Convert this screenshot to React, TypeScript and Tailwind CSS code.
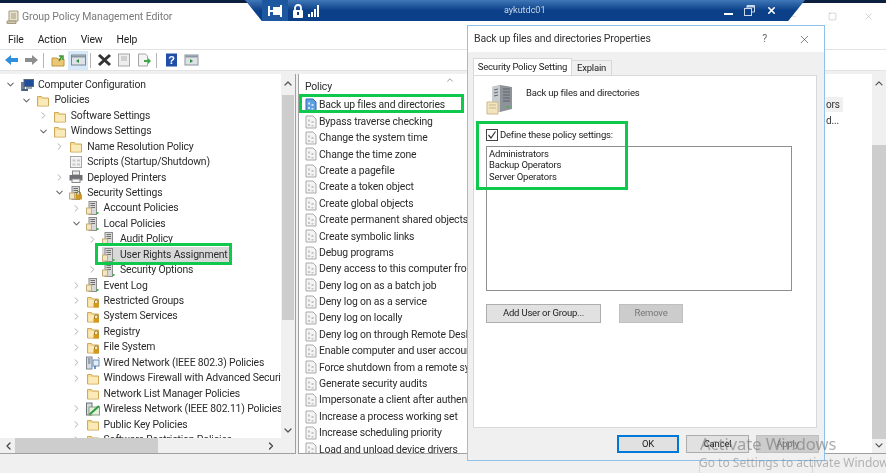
import { ChevronDown, ChevronRight, ChevronUp, ChevronLeft, X, Minus, Square } from 'lucide-react'

type IconKind = 'computer' | 'folder' | 'script' | 'printer' | 'lock' | 'server' | 'lockFolder' | 'net' | 'wifi'

const treeRows: { depth: number; arrow?: 'open' | 'closed'; icon: IconKind; label: string; selected?: boolean }[] = [
  { depth: 0, arrow: 'open', icon: 'computer', label: 'Computer Configuration' },
  { depth: 1, arrow: 'open', icon: 'folder', label: 'Policies' },
  { depth: 2, arrow: 'closed', icon: 'folder', label: 'Software Settings' },
  { depth: 2, arrow: 'open', icon: 'folder', label: 'Windows Settings' },
  { depth: 3, arrow: 'closed', icon: 'folder', label: 'Name Resolution Policy' },
  { depth: 3, icon: 'script', label: 'Scripts (Startup/Shutdown)' },
  { depth: 3, arrow: 'closed', icon: 'printer', label: 'Deployed Printers' },
  { depth: 3, arrow: 'open', icon: 'lock', label: 'Security Settings' },
  { depth: 4, arrow: 'closed', icon: 'server', label: 'Account Policies' },
  { depth: 4, arrow: 'open', icon: 'server', label: 'Local Policies' },
  { depth: 5, arrow: 'closed', icon: 'server', label: 'Audit Policy' },
  { depth: 5, icon: 'server', label: 'User Rights Assignment', selected: true },
  { depth: 5, arrow: 'closed', icon: 'server', label: 'Security Options' },
  { depth: 4, arrow: 'closed', icon: 'server', label: 'Event Log' },
  { depth: 4, arrow: 'closed', icon: 'lockFolder', label: 'Restricted Groups' },
  { depth: 4, arrow: 'closed', icon: 'lockFolder', label: 'System Services' },
  { depth: 4, arrow: 'closed', icon: 'lockFolder', label: 'Registry' },
  { depth: 4, arrow: 'closed', icon: 'lockFolder', label: 'File System' },
  { depth: 4, arrow: 'closed', icon: 'net', label: 'Wired Network (IEEE 802.3) Policies' },
  { depth: 4, arrow: 'closed', icon: 'folder', label: 'Windows Firewall with Advanced Security' },
  { depth: 4, icon: 'folder', label: 'Network List Manager Policies' },
  { depth: 4, arrow: 'closed', icon: 'wifi', label: 'Wireless Network (IEEE 802.11) Policies' },
  { depth: 4, arrow: 'closed', icon: 'folder', label: 'Public Key Policies' },
  { depth: 4, arrow: 'closed', icon: 'folder', label: 'Software Restriction Policies' },
]

const policies = [
  'Back up files and directories',
  'Bypass traverse checking',
  'Change the system time',
  'Change the time zone',
  'Create a pagefile',
  'Create a token object',
  'Create global objects',
  'Create permanent shared objects',
  'Create symbolic links',
  'Debug programs',
  'Deny access to this computer from the network',
  'Deny log on as a batch job',
  'Deny log on as a service',
  'Deny log on locally',
  'Deny log on through Remote Desktop Services',
  'Enable computer and user accounts to be trusted',
  'Force shutdown from a remote system',
  'Generate security audits',
  'Impersonate a client after authentication',
  'Increase a process working set',
  'Increase scheduling priority',
  'Load and unload device drivers',
]

function FolderGlyph() {
  return (
    <>
      <path d="M1.5 3.5h4l1 1.5h6v8h-11z" fill="#f6dc93" stroke="#cfa95a" strokeWidth="1" />
      <path d="M2.5 6h9.5v6.5h-9.5z" fill="#fbeab9" />
    </>
  )
}

function TreeIcon({ kind }: { kind: IconKind }) {
  return (
    <svg width="14" height="14" viewBox="0 0 14 14" className="shrink-0">
      {(kind === 'folder' || kind === 'lockFolder') && <FolderGlyph />}
      {kind === 'lockFolder' && (
        <>
          <path d="M8.5 9V7.5a1.7 1.7 0 0 1 3.4 0V9" fill="none" stroke="#8a6d2c" />
          <rect x="7.5" y="9" width="5.5" height="4.5" fill="#d19a1e" />
        </>
      )}
      {kind === 'computer' && (
        <>
          <rect x="1" y="4" width="4" height="9" fill="#6f7f95" />
          <rect x="4" y="1.5" width="9.5" height="7" fill="#1f4e9c" stroke="#5a6777" />
          <rect x="6" y="9" width="6" height="2" fill="#9aa5b3" />
          <rect x="2" y="11" width="6" height="2" fill="#48607f" />
        </>
      )}
      {kind === 'script' && (
        <>
          <rect x="1.5" y="1.5" width="11" height="11" fill="#f3f3f3" stroke="#a5a5a5" />
          <path d="M3.5 4.5h3v2h-3zM8 4.5h3v2h-3zM3.5 8.5h3v2h-3zM8 8.5h3v2h-3z" fill="#c8c8c8" />
        </>
      )}
      {kind === 'printer' && (
        <>
          <rect x="3.5" y="1" width="7" height="4" fill="#eeeeee" stroke="#888888" />
          <rect x="0.5" y="5" width="13" height="5.5" fill="#6d6f73" />
          <rect x="3" y="9" width="8" height="3.5" fill="#f5f5f5" stroke="#888888" />
        </>
      )}
      {(kind === 'lock' || kind === 'server') && (
        <>
          <rect x="3" y="0.5" width="7.5" height="13" fill="#d8d8d8" stroke="#8c8c8c" />
          <path d="M4.5 2.5h4.5M4.5 4.5h4.5M4.5 6.5h4.5" stroke="#6e6e6e" />
          <rect x="0.5" y="7" width="5" height="6" fill="#f4e6c0" stroke="#c3ad7a" />
          <rect x="10.5" y="11" width="2" height="2" fill="#3fb54a" />
        </>
      )}
      {kind === 'lock' && (
        <>
          <path d="M7.5 9V7.5a2 2 0 0 1 4 0V9" fill="none" stroke="#8a6d2c" />
          <rect x="6.5" y="8.5" width="6.5" height="5" fill="#d19a1e" />
        </>
      )}
      {kind === 'net' && (
        <>
          <rect x="0.5" y="1" width="5.5" height="12" fill="#d5dbe3" stroke="#7f8791" />
          <path d="M2 3h2.5M2 5h2.5M2 7h2.5" stroke="#5e6670" />
          <rect x="7" y="4" width="6" height="6" fill="#e4eef9" stroke="#6b8db8" />
          <path d="M9 10v3" stroke="#3e72b5" strokeWidth="1.5" />
          <path d="M12 1l1.5 2" stroke="#888888" />
        </>
      )}
      {kind === 'wifi' && (
        <>
          <rect x="0.5" y="1" width="5.5" height="12" fill="#d5d8dc" stroke="#6e747b" />
          <rect x="3" y="5" width="10.5" height="8" fill="#e2f0dc" stroke="#8b9a86" />
          <path d="M3.5 12.5L13 4" stroke="#2f9a3d" strokeWidth="2" />
        </>
      )}
    </svg>
  )
}

function PolicyIcon({ active }: { active?: boolean }) {
  const page = active ? '#5f9fe0' : '#f4f4f4'
  const line = active ? '#2f6cb5' : '#a9a9a9'
  return (
    <svg width="12" height="14" viewBox="0 0 12 14" className="shrink-0">
      <path d="M1 1h7l3 3v9H1z" fill={page} stroke={line} />
      <path d="M3 4.5h2v2H3zM6.5 6h2v2h-2zM3 9h2v2H3zM6.5 10h2v1.5h-2z" fill={active ? '#cfe3f8' : '#c4c4c4'} />
    </svg>
  )
}

function ToolButton({ children, active }: { children: React.ReactNode; active?: boolean }) {
  return (
    <div className={active ? 'flex h-[19px] w-[20px] items-center justify-center bg-[#d7e9f8]' : 'flex h-[19px] w-[20px] items-center justify-center'}>
      <svg width="15" height="14" viewBox="0 0 15 14">
        {children}
      </svg>
    </div>
  )
}

function Toolbar() {
  return (
    <div className="flex h-[20px] items-center bg-white pl-[1px]">
      <ToolButton>
        <path d="M14 5H7V2L1 7l6 5V9h7z" fill="#2f8fdc" />
      </ToolButton>
      <ToolButton>
        <path d="M1 5h7V2l6 5-6 5V9H1z" fill="#8e8e8e" />
      </ToolButton>
      <div className="mx-[2px] h-[15px] w-px bg-[#b5b5b5]" />
      <div className="ml-[2px]" />
      <ToolButton>
        <path d="M1 5h5l1 1h6v7H1z" fill="#edc874" stroke="#bd9444" />
        <path d="M8 8l3-5M8 3h4v4" fill="none" stroke="#3c9a3a" strokeWidth="1.5" />
      </ToolButton>
      <ToolButton active>
        <rect x="0.5" y="2" width="14" height="10" fill="#dfe3e7" stroke="#7b8794" />
        <rect x="1" y="2.5" width="13" height="2" fill="#8b97a3" />
        <path d="M8 6v4L5 8z" fill="#2f8f3f" />
      </ToolButton>
      <div className="mx-[2px] h-[15px] w-px bg-[#b5b5b5]" />
      <div className="ml-[1px]" />
      <ToolButton>
        <path d="M2 2l11 10M13 2L2 12" stroke="#333333" strokeWidth="3" />
      </ToolButton>
      <ToolButton>
        <rect x="1.5" y="1" width="11" height="12" fill="#eeeeee" stroke="#a6a6a6" />
        <rect x="4" y="3" width="6" height="5" fill="#d0d0d0" />
      </ToolButton>
      <ToolButton>
        <path d="M1.5 1h7l2 2v10h-9z" fill="#f4f4f4" stroke="#a6a6a6" />
        <path d="M7 7h4V5l3 3-3 3V9H7z" fill="#3fa648" />
      </ToolButton>
      <div className="mx-[2px] h-[15px] w-px bg-[#b5b5b5]" />
      <div className="ml-[2px]" />
      <ToolButton>
        <rect x="2" y="0.5" width="11" height="13" fill="#1f4fa8" />
        <text x="7.5" y="11" fontSize="11" fontWeight="700" fill="#ffffff" textAnchor="middle" fontFamily="Liberation Sans, sans-serif">?</text>
      </ToolButton>
      <ToolButton>
        <rect x="1" y="2" width="13" height="10" fill="#dfe3e7" stroke="#8a949e" />
        <rect x="1.5" y="2.5" width="12" height="2" fill="#8b97a3" />
        <path d="M6 6v4l3-2z" fill="#2f8f3f" />
      </ToolButton>
    </div>
  )
}

function ScrollTrack({ children, className }: { children: React.ReactNode; className: string }) {
  return <div className={className}>{children}</div>
}

function TreePane() {
  return (
    <div className="relative flex h-full w-[296px] shrink-0 flex-col border-r border-b border-[#a0a0a0] bg-white">
      <div className="flex min-h-0 flex-1">
        <div className="min-w-0 flex-1 overflow-hidden pt-[3px]">
          {treeRows.map(row => (
            <div key={row.label} className="flex h-[15.45px] items-center whitespace-nowrap" style={{ marginLeft: 5 + row.depth * 16.4 }}>
              <span className="flex w-[15px] shrink-0 items-center justify-start text-[#666666]">
                {row.arrow === 'open' && <ChevronDown size={11} strokeWidth={2.2} />}
                {row.arrow === 'closed' && <ChevronRight size={11} strokeWidth={2} className="text-[#a6a6a6]" />}
              </span>
              <span className={row.selected ? 'flex h-[15px] items-center bg-[#d9d9d9] pr-[2px]' : 'flex items-center'}>
                <TreeIcon kind={row.icon} />
                <span className="pl-[4px]">{row.label}</span>
              </span>
            </div>
          ))}
        </div>
        <ScrollTrack className="flex w-[14px] shrink-0 flex-col bg-[#f0f0f0] pt-[3px] text-[#555555]">
          <ChevronUp size={12} strokeWidth={2.5} className="mx-auto h-[13px]" />
          <div className="mx-[1px] mt-[5px] h-[225px] bg-[#cdcdcd]" />
          <div className="flex-1" />
          <ChevronDown size={12} strokeWidth={2.5} className="mx-auto mb-[1px] h-[13px]" />
        </ScrollTrack>
      </div>
      <div className="flex h-[15px] shrink-0 items-center bg-[#f0f0f0] text-[#444444]">
        <ChevronLeft size={12} strokeWidth={2.5} className="ml-[2px] w-[13px]" />
        <div className="h-full w-[143px] bg-[#cdcdcd]" />
        <ChevronRight size={12} strokeWidth={2.5} className="ml-[107px]" />
      </div>
    </div>
  )
}

function PolicyPane() {
  return (
    <div className="ml-[2px] flex h-full min-w-0 flex-1 border-b border-l border-[#a0a0a0] bg-white">
      <div className="min-w-0 flex-1 overflow-hidden">
        <div className="relative h-[23px] pl-[6px] pt-[5px] leading-[15px]">
          Policy
          <ChevronUp size={10} className="absolute left-[146px] top-[1px] text-[#888888]" />
        </div>
        {policies.map((name, i) => (
          <div key={name} className="flex h-[16.4px] items-center whitespace-nowrap pl-[6px]">
            <PolicyIcon active={i === 0} />
            <span className="pl-[2px]">{name}</span>
          </div>
        ))}
      </div>
      <div className="w-[30px]" />
      <ScrollTrack className="flex w-[14px] shrink-0 flex-col bg-[#f0f0f0] pt-[3px] text-[#555555]">
        <ChevronUp size={12} strokeWidth={2.5} className="mx-auto h-[13px]" />
        <div className="mt-[55px] h-[300px] bg-[#cdcdcd]" />
        <div className="flex-1" />
        <ChevronDown size={12} strokeWidth={2.5} className="mx-auto mb-[1px] h-[13px]" />
      </ScrollTrack>
    </div>
  )
}

function DialogButton({ label, variant }: { label: string; variant?: 'primary' | 'disabled' }) {
  const look =
    variant === 'primary'
      ? 'border-2 border-[#0078d7] bg-[#e1e1e1] text-[#222222]'
      : variant === 'disabled'
        ? 'border border-[#bfbfbf] bg-[#cccccc] text-[#777777]'
        : 'border border-[#adadad] bg-[#e1e1e1] text-[#222222]'
  return <div className={`flex h-full items-center justify-center ${look}`}>{label}</div>
}

function PropertiesDialog() {
  return (
    <div className="absolute left-[467px] top-[25px] flex h-[436px] w-[358px] flex-col border border-[#8fc1ea] bg-[#f0f0f0] text-[9.5px] tracking-[-0.2px] text-[#222222]">
      <div className="flex h-[26px] shrink-0 items-center bg-white pl-[6px] text-[10.5px] tracking-[-0.15px] text-[#333333]">
        <span>Back up files and directories Properties</span>
        <span className="ml-auto mr-[31px] text-[#666666]">?</span>
        <X size={13} strokeWidth={1.2} className="mr-[13px] text-[#444444]" />
      </div>
      <div className="ml-[5px] mt-[6px] flex h-[17px] items-end">
        <div className="flex h-[17px] w-[99px] items-center justify-center whitespace-nowrap border border-b-0 border-[#d9d9d9] bg-white">Security Policy Setting</div>
        <div className="flex h-[15px] w-[40px] items-center justify-center border border-b-0 border-l-0 border-[#d9d9d9] bg-[#f0f0f0]">Explain</div>
      </div>
      <div className="ml-[5px] flex h-[353px] w-[344px] flex-col border border-[#d9d9d9] bg-white pl-[12px]">
        <div className="flex h-[49px] items-start pt-[9px]">
          <svg width="27" height="31" viewBox="0 0 27 31" className="shrink-0">
            <path d="M6 2l8-2 12 2v22l-12 3-8-2z" fill="#8e9299" />
            <path d="M6 2l8-2v27l-8-2z" fill="#c9ccd1" />
            <path d="M8 5l4-1M8 8l4-1M8 11l4-1M17 4h7M17 7h7M17 10h7M17 13h7M17 16h7" stroke="#5f636a" />
            <path d="M1 17h11v12H1z" fill="#f2e4bd" stroke="#c9b98f" />
            <path d="M3 20h7M3 23h7" stroke="#c9b98f" />
            <rect x="21" y="21" width="2" height="2" fill="#3fb54a" />
          </svg>
          <span className="ml-[13px] pt-[1px]">Back up files and directories</span>
        </div>
        <div className="flex h-[20px] items-center">
          <div className="flex h-[12px] w-[12px] items-center justify-center border border-[#444444]">
            <svg width="10" height="10" viewBox="0 0 10 10">
              <path d="M1.5 5l2.5 3 4.5-6.5" fill="none" stroke="#333333" strokeWidth="1.2" />
            </svg>
          </div>
          <span className="pl-[2px]">Define these policy settings:</span>
        </div>
        <div className="mt-[1px] h-[145px] w-[306px] border border-[#8f8f8f] pl-[2px] pt-[1px] leading-[11.4px]">
          <div>Administrators</div>
          <div>Backup Operators</div>
          <div>Server Operators</div>
        </div>
        <div className="mt-[13px] flex h-[19px]">
          <div className="w-[115px]"><DialogButton label="Add User or Group..." /></div>
          <div className="ml-[18px] w-[64px]"><DialogButton label="Remove" variant="disabled" /></div>
        </div>
      </div>
      <div className="ml-[149px] mt-[7px] flex h-[18px] gap-[7px]">
        <div className="w-[62px]"><DialogButton label="OK" variant="primary" /></div>
        <div className="w-[63px]"><DialogButton label="Cancel" /></div>
        <div className="w-[63px]"><DialogButton label="Apply" variant="disabled" /></div>
      </div>
    </div>
  )
}

function RemoteBar() {
  return (
    <div className="absolute left-[245px] top-0 flex h-[21px] w-[560px] items-center bg-gradient-to-b from-[#3f78b8] via-[#0b3f88] to-[#0b3f88] pl-[17px] text-white [clip-path:polygon(0_0,100%_0,97%_100%,3%_100%)]">
      <div className="flex h-full w-[26px] items-center justify-center bg-[#1d579f]">
        <svg width="15" height="12" viewBox="0 0 15 12">
          <path d="M0 1h2v10H0zM12 0h2v12h-2zM2 5h10v2H2zM5 2h7v8H5z" fill="#ffffff" />
        </svg>
      </div>
      <svg width="12" height="14" viewBox="0 0 12 14" className="ml-[4px]">
        <path d="M3 6V4a3 3 0 0 1 6 0v2" fill="none" stroke="#ffffff" strokeWidth="1.8" />
        <rect x="1" y="6" width="10" height="8" rx="1" fill="#ffffff" />
        <rect x="5" y="8" width="2" height="3" fill="#0b3f88" />
      </svg>
      <svg width="12" height="12" viewBox="0 0 12 12" className="ml-[4px]">
        <path d="M0 9h2v3H0zM3 7h2v5H3zM6 4h2v8H6zM9 0h2v12H9z" fill="#ffffff" />
      </svg>
      <span className="ml-[184px] w-[196px] text-[9px] tracking-normal text-[#c9d8ea]">aykutdc01</span>
      <div className="ml-[24px] flex items-center">
        <div className="mt-[6px] h-[2px] w-[9px] bg-white" />
        <svg width="11" height="11" viewBox="0 0 11 11" className="ml-[11px]">
          <rect x="0.5" y="3.5" width="7" height="7" fill="none" stroke="#c9d8ea" />
          <path d="M3 3V0.5h7.5V7H8" fill="none" stroke="#c9d8ea" />
          <rect x="3" y="0.5" width="7.5" height="2" fill="#c9d8ea" />
        </svg>
        <X size={11} strokeWidth={3.5} className="ml-[11px]" />
      </div>
    </div>
  )
}

export default function App() {
  return (
    <div className="relative h-[473px] w-[886px] overflow-hidden bg-[#f0f0f0] font-['Roboto',sans-serif] text-[10.4px] tracking-[-0.15px] text-[#2b2b2b] blur-[0.3px]">
      <div className="flex h-[473px] flex-col">
        <div className="h-[3px] shrink-0 bg-[#0c1f3f]" />
        <div className="flex h-[27px] shrink-0 items-center bg-white pl-[6px]">
          <svg width="13" height="14" viewBox="0 0 13 14">
            <path d="M3 1h9v10H3z" fill="#e9e2cf" stroke="#a49a80" />
            <path d="M1 11h9v2.5H1z" fill="#cfc6ad" stroke="#a49a80" />
            <path d="M5 4h5M5 6h5M5 8h5" stroke="#a49a80" />
          </svg>
          <span className="pl-[3px] text-[10.5px] tracking-[-0.1px] text-[#7a7a7a]">Group Policy Management Editor</span>
          <div className="flex-1" />
          <Minus size={11} strokeWidth={1} className="text-[#bdbdbd]" />
          <Square size={9} strokeWidth={1.2} className="ml-[30px] text-[#a8a8a8]" />
          <X size={11} strokeWidth={1} className="ml-[26px] mr-[12px] text-[#a8a8a8]" />
        </div>
        <div className="flex h-[19px] shrink-0 items-center gap-[14px] bg-white pl-[8px] text-[#222222]">
          <span>File</span>
          <span>Action</span>
          <span>View</span>
          <span>Help</span>
        </div>
        <div className="h-px shrink-0 bg-[#e3e3e3]" />
        <Toolbar />
        <div className="h-[4px] shrink-0 border-t border-[#e3e3e3] bg-[#f0f0f0]" />
        <div className="flex h-[380px] shrink-0">
          <TreePane />
          <PolicyPane />
        </div>
        <div className="ml-[699px] h-[19px] w-[114px] border-x border-[#d9d9d9]" />
      </div>

      {/* row behind the dialog, only its right end shows */}
      <div className="absolute left-[826px] top-[97px] w-[17px] bg-[#f0f0f0] text-[10px] leading-[15px] text-[#333333]">
        <div className="h-[15px]">ors</div>
        <div className="bg-white pt-px">d...</div>
      </div>

      <RemoteBar />
      <PropertiesDialog />

      {/* green annotation boxes */}
      <div className="absolute left-[95px] top-[243px] h-[22px] w-[137px] border-[3px] border-[#0fc94c]" />
      <div className="absolute left-[299px] top-[94px] h-[19px] w-[165px] border-[3px] border-[#0fc94c]" />
      <div className="absolute left-[476px] top-[121px] h-[69px] w-[152px] border-[3px] border-[#0fc94c]" />

      {/* activation watermark */}
      <div className="absolute left-[700px] top-[432px] font-['Noto_Sans',sans-serif] text-[16.5px] leading-[24px] tracking-normal text-[#77777799]">Activate Windows</div>
      <div className="absolute left-[699px] top-[455px] whitespace-nowrap font-['Noto_Sans',sans-serif] text-[12px] leading-[16px] tracking-normal text-[#88888899]">Go to Settings to activate Windows.</div>
    </div>
  )
}
